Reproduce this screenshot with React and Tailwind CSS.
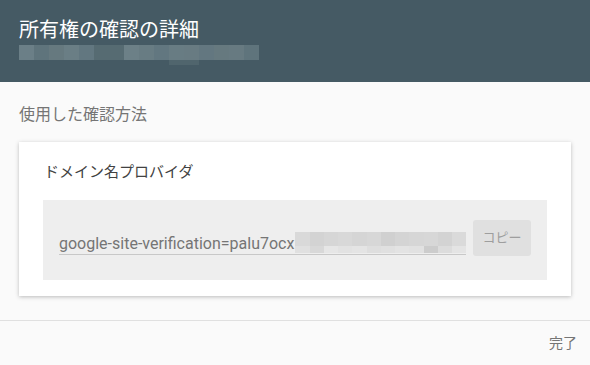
import React from "react";

const headerBlocks = ["#6b7f87","#5f747c","#66797f","#6a7e85","#627780","#566b72","#566b72","#6c8087","#687c83","#627780","#687c83","#687b82","#637780","#66797f","#677a81","#5f747c"];
const inputTop = ["#d9d9d9","#d3d3d3","#d6d6d6","#d8d8d8","#d5d5d5","#d7d7d7","#d0d0d0","#d4d4d4","#d6d6d6","#d7d7d7","#d3d3d3","#dadada"];
const inputBottom = ["#e0e0e0","#d8d8d8","#e6e6e6","#e2e2e2","#e4e4e4","#dedede","#e0e0e0","#e3e3e3","#e1e1e1","#cccccc","#dcdcdc","#e4e4e4"];

export default function App() {
  return (
    <div className="w-[590px] h-[365px] bg-[#fafafa] flex flex-col overflow-hidden" style={{ fontFamily: "Roboto, 'Noto Sans CJK JP', sans-serif" }}>
      <div className="h-[82px] bg-[#455a64] pl-[19px] pt-[17px] shrink-0">
        <div className="text-[20px] leading-[26px] text-white">所有権の確認の詳細</div>
        <div className="mt-[2px] flex flex-col">
          <div className="flex h-[15px]">
            {headerBlocks.map((c, i) => (
              <div key={i} className="w-[15px] h-[15px]" style={{ backgroundColor: c }} />
            ))}
          </div>
          <div className="flex h-[5px] pl-[150px]">
            <div className="w-[30px] h-[5px] bg-[#50656d]" />
          </div>
        </div>
      </div>
      <div className="flex-1 px-[19px] pt-[23px]">
        <div className="text-[16px] leading-[20px] text-[#757575]">使用した確認方法</div>
        <div className="mt-[17px] bg-white shadow-[0_1px_4px_rgba(0,0,0,0.25)] px-[24px] pt-[19px] pb-[16px]">
          <div className="text-[15px] leading-[22px] text-[#424242] pl-[1px]">ドメイン名プロバイダ</div>
          <div className="mt-[17px] h-[80px] bg-[#eeeeee] flex items-start pt-[20px] pl-[16px] pr-[16px]">
            <div className="flex flex-1 min-w-0 items-end border-b border-[#c8c8c8] h-[35px] overflow-hidden">
              <span className="shrink-0 whitespace-nowrap text-[16px] leading-[20px] text-[#757575]">google-site-verification=palu7ocx</span>
              <div className="flex flex-col ml-[1px] shrink-0 mb-[1px]">
                <div className="flex">
                  {inputTop.map((c, i) => (
                    <div key={i} className="w-[14.25px] h-[14px]" style={{ backgroundColor: c }} />
                  ))}
                </div>
                <div className="flex">
                  {inputBottom.map((c, i) => (
                    <div key={i} className="w-[14.25px] h-[7px]" style={{ backgroundColor: c }} />
                  ))}
                </div>
              </div>
            </div>
            <div className="shrink-0 ml-[7px] w-[58px] h-[36px] bg-[#e0e0e0] rounded-[3px] flex items-center justify-center text-[13px] text-[#9e9e9e]">コピー</div>
          </div>
        </div>
      </div>
      <div className="h-[45px] border-t border-[#e0e0e0] flex items-center justify-end pr-[13px] shrink-0">
        <span className="text-[14px] text-[#757575]">完了</span>
      </div>
    </div>
  );
}
